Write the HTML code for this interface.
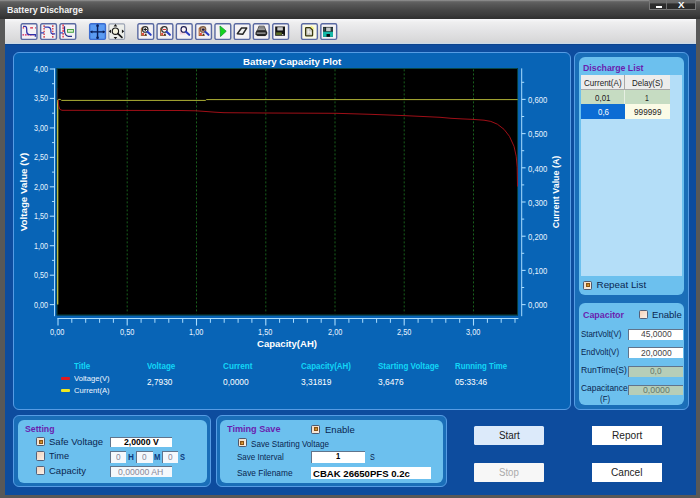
<!DOCTYPE html>
<html><head><meta charset="utf-8"><title>Battery Discharge</title>
<style>
html,body{margin:0;padding:0;}
body{width:700px;height:498px;overflow:hidden;position:relative;background:#0d4c9e;font-family:"Liberation Sans",sans-serif;}
.t{position:absolute;white-space:nowrap;transform-origin:0 50%;display:block;}
.b{position:absolute;box-sizing:border-box;}
svg{position:absolute;overflow:visible;}
</style></head><body>
<div class="b" style="left:0.00px;top:0.00px;width:700.00px;height:498.00px;background:#585858;"></div>
<div class="b" style="left:0.00px;top:0.00px;width:700.00px;height:19.00px;background:linear-gradient(#8a8a8a 0%,#868686 4%,#626262 9%,#565656 26%,#454545 55%,#3c3c3c 78%,#343434 90%,#303030 100%);"></div>
<span class="t" style="left:6.50px;top:2.50px;font-size:9.5px;line-height:13px;color:#f2f2f2;font-weight:bold;transform:scaleX(0.9335);">Battery Discharge</span>
<div class="b" style="left:648.80px;top:0.00px;width:47.20px;height:10.20px;border:1px solid #787878;border-top:none;background:linear-gradient(#6a6a6a 0%,#666 34%,#2e2e2e 42%,#2a2a2a 100%);"></div>
<div class="b" style="left:665.80px;top:0.00px;width:1.00px;height:10.00px;background:#707070;"></div>
<div class="b" style="left:655.90px;top:5.80px;width:6.60px;height:2.20px;background:#fff;"></div>
<span class="t" style="left:677.50px;top:-0.20px;font-size:8.2px;line-height:11px;color:#fff;font-weight:bold;transform:scaleX(1.1884);">X</span>
<div class="b" style="left:4.50px;top:19.20px;width:691.80px;height:24.70px;background:linear-gradient(#f8f8fa 0%,#eeeeef 14%,#e4e4e6 45%,#dadadb 80%,#d4d5d8 93%,#c6daea 100%);"></div>
<div class="b" style="left:4.50px;top:43.90px;width:691.80px;height:450.90px;background:#0d4c9e;"></div>
<div class="b" style="left:4.50px;top:43.90px;width:691.80px;height:1.30px;background:linear-gradient(#0a3a80,#0d4c9e);"></div>
<div class="b" style="left:12.50px;top:52.00px;width:558.50px;height:358.30px;border:1.6px solid #569ce4;border-radius:6px;background:#0864b6;"></div>
<div class="b" style="left:574.00px;top:52.00px;width:114.60px;height:358.30px;border:1.6px solid #569ce4;border-radius:6px;background:#1a6eb8;"></div>
<div class="b" style="left:578.80px;top:56.60px;width:104.80px;height:238.90px;border-radius:6px;background:#6cc0ee;"></div>
<div class="b" style="left:578.80px;top:303.20px;width:104.80px;height:101.80px;border-radius:6px;background:#6cc0ee;"></div>
<div class="b" style="left:13.00px;top:415.00px;width:197.50px;height:72.00px;border:1.6px solid #569ce4;border-radius:6px;background:#1a6eb8;"></div>
<div class="b" style="left:18.00px;top:419.50px;width:189.00px;height:63.00px;border-radius:6px;background:#6cc0ee;"></div>
<div class="b" style="left:216.00px;top:415.00px;width:230.50px;height:72.00px;border:1.6px solid #569ce4;border-radius:6px;background:#1a6eb8;"></div>
<div class="b" style="left:220.00px;top:419.50px;width:223.00px;height:63.00px;border-radius:6px;background:#6cc0ee;"></div>
<svg width="700" height="498" style="left:0;top:0" viewBox="0 0 700 498">
<rect x="56.6" y="68.1" width="461.4" height="247.3" fill="#000"/>
<path d="M57.1 315V68.5H517.6V315Z" fill="none" stroke="#0a5654" stroke-width="0.8"/>
<line x1="127.2" y1="69.4" x2="127.2" y2="313.6" stroke="#18601c" stroke-width="1" stroke-dasharray="2 2"/>
<line x1="196.5" y1="69.4" x2="196.5" y2="313.6" stroke="#18601c" stroke-width="1" stroke-dasharray="2 2"/>
<line x1="265.8" y1="69.4" x2="265.8" y2="313.6" stroke="#18601c" stroke-width="1" stroke-dasharray="2 2"/>
<line x1="335.0" y1="69.4" x2="335.0" y2="313.6" stroke="#18601c" stroke-width="1" stroke-dasharray="2 2"/>
<line x1="404.2" y1="69.4" x2="404.2" y2="313.6" stroke="#18601c" stroke-width="1" stroke-dasharray="2 2"/>
<line x1="473.5" y1="69.4" x2="473.5" y2="313.6" stroke="#18601c" stroke-width="1" stroke-dasharray="2 2"/>
<line x1="54.5" y1="68.4" x2="54.5" y2="316.2" stroke="#a8dcff" stroke-width="1"/>
<line x1="49.8" y1="69.0" x2="54.5" y2="69.0" stroke="#a8dcff" stroke-width="1.1"/>
<line x1="52" y1="83.7" x2="54.5" y2="83.7" stroke="#a8dcff" stroke-width="1"/>
<line x1="49.8" y1="98.4" x2="54.5" y2="98.4" stroke="#a8dcff" stroke-width="1.1"/>
<line x1="52" y1="113.2" x2="54.5" y2="113.2" stroke="#a8dcff" stroke-width="1"/>
<line x1="49.8" y1="127.9" x2="54.5" y2="127.9" stroke="#a8dcff" stroke-width="1.1"/>
<line x1="52" y1="142.6" x2="54.5" y2="142.6" stroke="#a8dcff" stroke-width="1"/>
<line x1="49.8" y1="157.4" x2="54.5" y2="157.4" stroke="#a8dcff" stroke-width="1.1"/>
<line x1="52" y1="172.1" x2="54.5" y2="172.1" stroke="#a8dcff" stroke-width="1"/>
<line x1="49.8" y1="186.8" x2="54.5" y2="186.8" stroke="#a8dcff" stroke-width="1.1"/>
<line x1="52" y1="201.5" x2="54.5" y2="201.5" stroke="#a8dcff" stroke-width="1"/>
<line x1="49.8" y1="216.2" x2="54.5" y2="216.2" stroke="#a8dcff" stroke-width="1.1"/>
<line x1="52" y1="231.0" x2="54.5" y2="231.0" stroke="#a8dcff" stroke-width="1"/>
<line x1="49.8" y1="245.7" x2="54.5" y2="245.7" stroke="#a8dcff" stroke-width="1.1"/>
<line x1="52" y1="260.4" x2="54.5" y2="260.4" stroke="#a8dcff" stroke-width="1"/>
<line x1="49.8" y1="275.2" x2="54.5" y2="275.2" stroke="#a8dcff" stroke-width="1.1"/>
<line x1="52" y1="289.9" x2="54.5" y2="289.9" stroke="#a8dcff" stroke-width="1"/>
<line x1="49.8" y1="304.6" x2="54.5" y2="304.6" stroke="#a8dcff" stroke-width="1.1"/>
<line x1="521.7" y1="68.4" x2="521.7" y2="316.2" stroke="#a8dcff" stroke-width="1"/>
<line x1="521.7" y1="99.4" x2="525.6" y2="99.4" stroke="#a8dcff" stroke-width="1.1"/>
<line x1="521.7" y1="82.3" x2="524.2" y2="82.3" stroke="#a8dcff" stroke-width="1"/>
<line x1="521.7" y1="133.6" x2="525.6" y2="133.6" stroke="#a8dcff" stroke-width="1.1"/>
<line x1="521.7" y1="116.5" x2="524.2" y2="116.5" stroke="#a8dcff" stroke-width="1"/>
<line x1="521.7" y1="167.8" x2="525.6" y2="167.8" stroke="#a8dcff" stroke-width="1.1"/>
<line x1="521.7" y1="150.7" x2="524.2" y2="150.7" stroke="#a8dcff" stroke-width="1"/>
<line x1="521.7" y1="202.0" x2="525.6" y2="202.0" stroke="#a8dcff" stroke-width="1.1"/>
<line x1="521.7" y1="184.9" x2="524.2" y2="184.9" stroke="#a8dcff" stroke-width="1"/>
<line x1="521.7" y1="236.2" x2="525.6" y2="236.2" stroke="#a8dcff" stroke-width="1.1"/>
<line x1="521.7" y1="219.1" x2="524.2" y2="219.1" stroke="#a8dcff" stroke-width="1"/>
<line x1="521.7" y1="270.4" x2="525.6" y2="270.4" stroke="#a8dcff" stroke-width="1.1"/>
<line x1="521.7" y1="253.3" x2="524.2" y2="253.3" stroke="#a8dcff" stroke-width="1"/>
<line x1="521.7" y1="304.6" x2="525.6" y2="304.6" stroke="#a8dcff" stroke-width="1.1"/>
<line x1="521.7" y1="287.5" x2="524.2" y2="287.5" stroke="#a8dcff" stroke-width="1"/>
<line x1="57.4" y1="318.5" x2="518.4" y2="318.5" stroke="#a8dcff" stroke-width="1"/>
<line x1="58.0" y1="318.5" x2="58.0" y2="325.6" stroke="#a8dcff" stroke-width="1.1"/>
<line x1="71.8" y1="318.5" x2="71.8" y2="322.8" stroke="#a8dcff" stroke-width="1"/>
<line x1="85.7" y1="318.5" x2="85.7" y2="322.8" stroke="#a8dcff" stroke-width="1"/>
<line x1="99.6" y1="318.5" x2="99.6" y2="322.8" stroke="#a8dcff" stroke-width="1"/>
<line x1="113.4" y1="318.5" x2="113.4" y2="322.8" stroke="#a8dcff" stroke-width="1"/>
<line x1="127.2" y1="318.5" x2="127.2" y2="325.6" stroke="#a8dcff" stroke-width="1.1"/>
<line x1="141.1" y1="318.5" x2="141.1" y2="322.8" stroke="#a8dcff" stroke-width="1"/>
<line x1="154.9" y1="318.5" x2="154.9" y2="322.8" stroke="#a8dcff" stroke-width="1"/>
<line x1="168.8" y1="318.5" x2="168.8" y2="322.8" stroke="#a8dcff" stroke-width="1"/>
<line x1="182.7" y1="318.5" x2="182.7" y2="322.8" stroke="#a8dcff" stroke-width="1"/>
<line x1="196.5" y1="318.5" x2="196.5" y2="325.6" stroke="#a8dcff" stroke-width="1.1"/>
<line x1="210.4" y1="318.5" x2="210.4" y2="322.8" stroke="#a8dcff" stroke-width="1"/>
<line x1="224.2" y1="318.5" x2="224.2" y2="322.8" stroke="#a8dcff" stroke-width="1"/>
<line x1="238.1" y1="318.5" x2="238.1" y2="322.8" stroke="#a8dcff" stroke-width="1"/>
<line x1="251.9" y1="318.5" x2="251.9" y2="322.8" stroke="#a8dcff" stroke-width="1"/>
<line x1="265.8" y1="318.5" x2="265.8" y2="325.6" stroke="#a8dcff" stroke-width="1.1"/>
<line x1="279.6" y1="318.5" x2="279.6" y2="322.8" stroke="#a8dcff" stroke-width="1"/>
<line x1="293.5" y1="318.5" x2="293.5" y2="322.8" stroke="#a8dcff" stroke-width="1"/>
<line x1="307.3" y1="318.5" x2="307.3" y2="322.8" stroke="#a8dcff" stroke-width="1"/>
<line x1="321.2" y1="318.5" x2="321.2" y2="322.8" stroke="#a8dcff" stroke-width="1"/>
<line x1="335.0" y1="318.5" x2="335.0" y2="325.6" stroke="#a8dcff" stroke-width="1.1"/>
<line x1="348.9" y1="318.5" x2="348.9" y2="322.8" stroke="#a8dcff" stroke-width="1"/>
<line x1="362.7" y1="318.5" x2="362.7" y2="322.8" stroke="#a8dcff" stroke-width="1"/>
<line x1="376.6" y1="318.5" x2="376.6" y2="322.8" stroke="#a8dcff" stroke-width="1"/>
<line x1="390.4" y1="318.5" x2="390.4" y2="322.8" stroke="#a8dcff" stroke-width="1"/>
<line x1="404.2" y1="318.5" x2="404.2" y2="325.6" stroke="#a8dcff" stroke-width="1.1"/>
<line x1="418.1" y1="318.5" x2="418.1" y2="322.8" stroke="#a8dcff" stroke-width="1"/>
<line x1="432.0" y1="318.5" x2="432.0" y2="322.8" stroke="#a8dcff" stroke-width="1"/>
<line x1="445.8" y1="318.5" x2="445.8" y2="322.8" stroke="#a8dcff" stroke-width="1"/>
<line x1="459.7" y1="318.5" x2="459.7" y2="322.8" stroke="#a8dcff" stroke-width="1"/>
<line x1="473.5" y1="318.5" x2="473.5" y2="325.6" stroke="#a8dcff" stroke-width="1.1"/>
<line x1="487.4" y1="318.5" x2="487.4" y2="322.8" stroke="#a8dcff" stroke-width="1"/>
<line x1="501.2" y1="318.5" x2="501.2" y2="322.8" stroke="#a8dcff" stroke-width="1"/>
<line x1="515.0" y1="318.5" x2="515.0" y2="322.8" stroke="#a8dcff" stroke-width="1"/>
<polyline fill="none" stroke="#b8ba38" stroke-width="0.95" points="57.7,100.2 58.4,99.4 60.5,99.4 61.5,100.4 205.5,100.4 206.5,99.6 517.7,99.6"/>
<line x1="57.7" y1="100" x2="57.7" y2="304.6" stroke="#c8ca48" stroke-width="1.25"/>
<line x1="57.6" y1="88" x2="57.6" y2="100" stroke="#7a1018" stroke-width="0.9" opacity="0.4"/>
<polyline fill="none" stroke="#a81018" stroke-width="0.95" stroke-linejoin="round" points="58.1,100 58.7,106 59.8,109.3 62,110.3 120,110.4 180,110.5 196,110.8 206,111.5 215,112.2 224,112.7 265,113 336,113.3 370,114.3 404,115.6 440,117.3 451,118.3 462,118.9 473,119.4 484,120.2 490.8,121.4 497.4,124.2 504,129.3 509.5,136.4 514,146.3 516.2,156.2 517.2,167.3 517.5,186.5"/>
</svg>
<span class="t" style="left:33.60px;top:62.90px;font-size:8.4px;line-height:12px;color:#e8f4ff;transform:scaleX(0.8625);">4,00</span>
<span class="t" style="left:33.60px;top:92.35px;font-size:8.4px;line-height:12px;color:#e8f4ff;transform:scaleX(0.8625);">3,50</span>
<span class="t" style="left:33.60px;top:121.80px;font-size:8.4px;line-height:12px;color:#e8f4ff;transform:scaleX(0.8625);">3,00</span>
<span class="t" style="left:33.60px;top:151.25px;font-size:8.4px;line-height:12px;color:#e8f4ff;transform:scaleX(0.8625);">2,50</span>
<span class="t" style="left:33.60px;top:180.70px;font-size:8.4px;line-height:12px;color:#e8f4ff;transform:scaleX(0.8625);">2,00</span>
<span class="t" style="left:33.60px;top:210.15px;font-size:8.4px;line-height:12px;color:#e8f4ff;transform:scaleX(0.8625);">1,50</span>
<span class="t" style="left:33.60px;top:239.60px;font-size:8.4px;line-height:12px;color:#e8f4ff;transform:scaleX(0.8625);">1,00</span>
<span class="t" style="left:33.60px;top:269.05px;font-size:8.4px;line-height:12px;color:#e8f4ff;transform:scaleX(0.8625);">0,50</span>
<span class="t" style="left:33.60px;top:298.50px;font-size:8.4px;line-height:12px;color:#e8f4ff;transform:scaleX(0.8625);">0,00</span>
<span class="t" style="left:528.00px;top:94.10px;font-size:8.4px;line-height:12px;color:#e8f4ff;transform:scaleX(0.9135);">0,600</span>
<span class="t" style="left:528.00px;top:128.30px;font-size:8.4px;line-height:12px;color:#e8f4ff;transform:scaleX(0.9135);">0,500</span>
<span class="t" style="left:528.00px;top:162.50px;font-size:8.4px;line-height:12px;color:#e8f4ff;transform:scaleX(0.9135);">0,400</span>
<span class="t" style="left:528.00px;top:196.70px;font-size:8.4px;line-height:12px;color:#e8f4ff;transform:scaleX(0.9135);">0,300</span>
<span class="t" style="left:528.00px;top:230.90px;font-size:8.4px;line-height:12px;color:#e8f4ff;transform:scaleX(0.9135);">0,200</span>
<span class="t" style="left:528.00px;top:265.10px;font-size:8.4px;line-height:12px;color:#e8f4ff;transform:scaleX(0.9135);">0,100</span>
<span class="t" style="left:528.00px;top:299.30px;font-size:8.4px;line-height:12px;color:#e8f4ff;transform:scaleX(0.9135);">0,000</span>
<span class="t" style="left:49.70px;top:325.50px;font-size:8.4px;line-height:12px;color:#e8f4ff;transform:scaleX(0.8809);">0,00</span>
<span class="t" style="left:119.75px;top:325.50px;font-size:8.4px;line-height:12px;color:#e8f4ff;transform:scaleX(0.8809);">0,50</span>
<span class="t" style="left:189.00px;top:325.50px;font-size:8.4px;line-height:12px;color:#e8f4ff;transform:scaleX(0.8809);">1,00</span>
<span class="t" style="left:258.25px;top:325.50px;font-size:8.4px;line-height:12px;color:#e8f4ff;transform:scaleX(0.8809);">1,50</span>
<span class="t" style="left:327.50px;top:325.50px;font-size:8.4px;line-height:12px;color:#e8f4ff;transform:scaleX(0.8809);">2,00</span>
<span class="t" style="left:396.75px;top:325.50px;font-size:8.4px;line-height:12px;color:#e8f4ff;transform:scaleX(0.8809);">2,50</span>
<span class="t" style="left:466.00px;top:325.50px;font-size:8.4px;line-height:12px;color:#e8f4ff;transform:scaleX(0.8809);">3,00</span>
<span class="t" style="left:242.90px;top:55.10px;font-size:9.6px;line-height:13px;color:#fff;font-weight:bold;transform:scaleX(1.0170);">Battery Capacity Plot</span>
<span class="t" style="left:257.10px;top:337.30px;font-size:9.6px;line-height:13px;color:#fff;font-weight:bold;transform:scaleX(0.9955);">Capacity(AH)</span>
<span class="t" style="left:-14.59px;top:185.20px;font-size:9.6px;line-height:14px;color:#fff;font-weight:bold;transform-origin:50% 50%;transform:rotate(-90deg) scaleX(1.0185);">Voltage Value (V)</span>
<span class="t" style="left:516.60px;top:185.20px;font-size:9.6px;line-height:14px;color:#fff;font-weight:bold;transform-origin:50% 50%;transform:rotate(-90deg) scaleX(0.9259);">Current Value (A)</span>
<span class="t" style="left:74.30px;top:360.00px;font-size:8.6px;line-height:12px;color:#12d6f6;font-weight:bold;transform:scaleX(0.9303);">Title</span>
<span class="t" style="left:146.60px;top:360.00px;font-size:8.6px;line-height:12px;color:#12d6f6;font-weight:bold;transform:scaleX(0.9303);">Voltage</span>
<span class="t" style="left:223.40px;top:360.00px;font-size:8.6px;line-height:12px;color:#12d6f6;font-weight:bold;transform:scaleX(0.9499);">Current</span>
<span class="t" style="left:300.90px;top:360.00px;font-size:8.6px;line-height:12px;color:#12d6f6;font-weight:bold;transform:scaleX(0.9260);">Capacity(AH)</span>
<span class="t" style="left:378.00px;top:360.00px;font-size:8.6px;line-height:12px;color:#12d6f6;font-weight:bold;transform:scaleX(0.9357);">Starting Voltage</span>
<span class="t" style="left:454.90px;top:360.00px;font-size:8.6px;line-height:12px;color:#12d6f6;font-weight:bold;transform:scaleX(0.9131);">Running Time</span>
<span class="t" style="left:74.30px;top:372.70px;font-size:7.9px;line-height:11px;color:#eef6ff;transform:scaleX(0.9678);">Voltage(V)</span>
<span class="t" style="left:74.30px;top:385.30px;font-size:7.9px;line-height:11px;color:#eef6ff;transform:scaleX(0.9682);">Current(A)</span>
<div class="b" style="left:61.00px;top:377.00px;width:9.00px;height:3.00px;background:#e01820;border-radius:1px;"></div>
<div class="b" style="left:61.00px;top:389.20px;width:9.00px;height:3.00px;background:#f0e820;border-radius:1px;"></div>
<span class="t" style="left:146.60px;top:376.20px;font-size:8.6px;line-height:12px;color:#fff;transform:scaleX(0.9657);">2,7930</span>
<span class="t" style="left:223.40px;top:376.20px;font-size:8.6px;line-height:12px;color:#fff;transform:scaleX(0.9771);">0,0000</span>
<span class="t" style="left:300.90px;top:376.20px;font-size:8.6px;line-height:12px;color:#fff;transform:scaleX(0.9812);">3,31819</span>
<span class="t" style="left:378.00px;top:376.20px;font-size:8.6px;line-height:12px;color:#fff;transform:scaleX(0.9771);">3,6476</span>
<span class="t" style="left:454.90px;top:376.20px;font-size:8.6px;line-height:12px;color:#fff;transform:scaleX(0.9620);">05:33:46</span>
<span class="t" style="left:583.30px;top:60.70px;font-size:9.6px;line-height:13px;color:#6a1eae;font-weight:bold;transform:scaleX(0.9146);">Discharge List</span>
<div class="b" style="left:581.00px;top:75.00px;width:100.50px;height:200.50px;background:#b4def8;"></div>
<div class="b" style="left:581.00px;top:75.00px;width:88.50px;height:14.50px;background:#ececec;border-bottom:1px solid #a8a8a8;"></div>
<div class="b" style="left:624.00px;top:75.00px;width:1.00px;height:14.50px;background:#a8a8a8;"></div>
<div class="b" style="left:581.00px;top:89.50px;width:88.50px;height:14.50px;background:#c6dcc2;"></div>
<div class="b" style="left:624.00px;top:89.50px;width:1.00px;height:14.50px;background:#e6efe2;"></div>
<div class="b" style="left:581.00px;top:104.00px;width:43.50px;height:14.50px;background:#0c6cd4;"></div>
<div class="b" style="left:624.50px;top:104.00px;width:45.00px;height:14.50px;background:#fbfbe6;"></div>
<span class="t" style="left:584.00px;top:77.00px;font-size:8.8px;line-height:12px;color:#222;transform:scaleX(0.9155);">Current(A)</span>
<span class="t" style="left:632.00px;top:77.00px;font-size:8.8px;line-height:12px;color:#222;transform:scaleX(0.9057);">Delay(S)</span>
<span class="t" style="left:595.00px;top:92.00px;font-size:8.8px;line-height:12px;color:#222;transform:scaleX(0.9051);">0,01</span>
<span class="t" style="left:645.20px;top:92.00px;font-size:8.8px;line-height:12px;color:#222;transform:scaleX(0.7765);">1</span>
<span class="t" style="left:597.50px;top:106.20px;font-size:8.8px;line-height:12px;color:#fff;transform:scaleX(0.8993);">0,6</span>
<span class="t" style="left:634.00px;top:106.20px;font-size:8.8px;line-height:12px;color:#222;transform:scaleX(0.9366);">999999</span>
<div class="b" style="left:583.20px;top:280.60px;width:9.20px;height:9.20px;border:1px solid #50586c;border-radius:1.5px;background:linear-gradient(135deg,#f4dcc4,#f8ece0);"><div class="b" style="left:1.5px;top:1.5px;width:4.4px;height:4.4px;background:linear-gradient(135deg,#a86818,#eeb040);border:0.6px solid #8a5414;"></div></div>
<span class="t" style="left:596.60px;top:277.90px;font-size:9.8px;line-height:14px;color:#0a2650;">Repeat List</span>
<span class="t" style="left:582.80px;top:308.00px;font-size:9.6px;line-height:13px;color:#6a1eae;font-weight:bold;transform:scaleX(0.9260);">Capacitor</span>
<div class="b" style="left:639.00px;top:310.00px;width:9.20px;height:9.20px;border:1px solid #566078;border-radius:1.5px;background:linear-gradient(135deg,#f4d2ba,#f8f0e8);"></div>
<span class="t" style="left:652.00px;top:308.20px;font-size:9.8px;line-height:14px;color:#0a2650;transform:scaleX(0.9766);">Enable</span>
<span class="t" style="left:581.00px;top:327.60px;font-size:8.4px;line-height:12px;color:#0a2650;transform:scaleX(0.9430);">StartVolt(V)</span>
<span class="t" style="left:581.00px;top:345.80px;font-size:8.4px;line-height:12px;color:#0a2650;transform:scaleX(0.9514);">EndVolt(V)</span>
<span class="t" style="left:581.00px;top:363.70px;font-size:9.0px;line-height:13px;color:#0a2650;transform:scaleX(0.9529);">RunTime(S)</span>
<span class="t" style="left:581.00px;top:382.40px;font-size:9.0px;line-height:13px;color:#0a2650;transform:scaleX(0.9315);">Capacitance</span>
<span class="t" style="left:599.50px;top:392.50px;font-size:8.4px;line-height:12px;color:#0a2650;transform:scaleX(0.9418);">(F)</span>
<div class="b" style="left:628.00px;top:328.50px;width:55.00px;height:11.10px;border-top:1px solid #60748c;border-left:1px solid #60748c;background:#fff;"></div>
<div class="b" style="left:628.00px;top:347.30px;width:55.00px;height:11.10px;border-top:1px solid #60748c;border-left:1px solid #60748c;background:#fff;"></div>
<div class="b" style="left:628.00px;top:366.00px;width:55.00px;height:10.60px;border-top:1px solid #60748c;border-left:1px solid #60748c;background:#b6ceb8;"></div>
<div class="b" style="left:628.00px;top:384.60px;width:55.00px;height:10.70px;border-top:1px solid #60748c;border-left:1px solid #60748c;background:#b6ceb8;"></div>
<span class="t" style="left:640.70px;top:327.90px;font-size:9.0px;line-height:13px;color:#444;transform:scaleX(0.9407);">45,0000</span>
<span class="t" style="left:640.70px;top:346.70px;font-size:9.0px;line-height:13px;color:#444;transform:scaleX(0.9407);">20,0000</span>
<span class="t" style="left:650.20px;top:365.10px;font-size:9.0px;line-height:13px;color:#66786a;transform:scaleX(0.9193);">0,0</span>
<span class="t" style="left:642.60px;top:383.70px;font-size:9.0px;line-height:13px;color:#66786a;transform:scaleX(0.9737);">0,0000</span>
<span class="t" style="left:24.60px;top:422.00px;font-size:9.6px;line-height:13px;color:#6a1eae;font-weight:bold;transform:scaleX(0.9069);">Setting</span>
<div class="b" style="left:36.00px;top:437.30px;width:9.20px;height:9.20px;border:1px solid #50586c;border-radius:1.5px;background:linear-gradient(135deg,#f4dcc4,#f8ece0);"><div class="b" style="left:1.5px;top:1.5px;width:4.4px;height:4.4px;background:linear-gradient(135deg,#a86818,#eeb040);border:0.6px solid #8a5414;"></div></div>
<div class="b" style="left:36.00px;top:451.40px;width:9.20px;height:9.20px;border:1px solid #566078;border-radius:1.5px;background:linear-gradient(135deg,#f4d2ba,#f8f0e8);"></div>
<div class="b" style="left:36.00px;top:465.80px;width:9.20px;height:9.20px;border:1px solid #566078;border-radius:1.5px;background:linear-gradient(135deg,#f4d2ba,#f8f0e8);"></div>
<span class="t" style="left:49.20px;top:434.90px;font-size:9.8px;line-height:14px;color:#0a2650;transform:scaleX(0.9734);">Safe Voltage</span>
<span class="t" style="left:49.20px;top:449.20px;font-size:9.8px;line-height:14px;color:#0a2650;transform:scaleX(0.9387);">Time</span>
<span class="t" style="left:49.20px;top:463.60px;font-size:9.8px;line-height:14px;color:#0a2650;transform:scaleX(0.9705);">Capacity</span>
<div class="b" style="left:109.70px;top:437.00px;width:62.10px;height:10.40px;border-top:1px solid #60748c;border-left:1px solid #60748c;background:#fff;"></div>
<span class="t" style="left:123.80px;top:436.00px;font-size:9.0px;line-height:13px;color:#000;font-weight:bold;transform:scaleX(0.9631);">2,0000 V</span>
<div class="b" style="left:109.70px;top:451.40px;width:16.20px;height:11.20px;border-top:1px solid #60748c;border-left:1px solid #60748c;background:#f4f8fc;"></div>
<span class="t" style="left:115.50px;top:451.30px;font-size:8.8px;line-height:12px;color:#889;transform:scaleX(0.9400);">0</span>
<div class="b" style="left:135.70px;top:451.40px;width:16.90px;height:11.20px;border-top:1px solid #60748c;border-left:1px solid #60748c;background:#f4f8fc;"></div>
<span class="t" style="left:141.85px;top:451.30px;font-size:8.8px;line-height:12px;color:#889;transform:scaleX(0.9400);">0</span>
<div class="b" style="left:162.40px;top:451.40px;width:16.10px;height:11.20px;border-top:1px solid #60748c;border-left:1px solid #60748c;background:#f4f8fc;"></div>
<span class="t" style="left:168.15px;top:451.30px;font-size:8.8px;line-height:12px;color:#889;transform:scaleX(0.9400);">0</span>
<span class="t" style="left:127.80px;top:450.80px;font-size:9px;line-height:13px;color:#0c3c80;font-weight:bold;transform:scaleX(0.9077);">H</span>
<span class="t" style="left:154.00px;top:450.80px;font-size:9px;line-height:13px;color:#0c3c80;font-weight:bold;transform:scaleX(0.8537);">M</span>
<span class="t" style="left:180.00px;top:450.80px;font-size:9px;line-height:13px;color:#0c3c80;font-weight:bold;transform:scaleX(0.8329);">S</span>
<div class="b" style="left:109.70px;top:466.40px;width:62.10px;height:10.40px;border-top:1px solid #60748c;border-left:1px solid #60748c;background:#f4f8fc;"></div>
<span class="t" style="left:118.00px;top:465.60px;font-size:8.8px;line-height:12px;color:#889;transform:scaleX(0.9828);">0,00000 AH</span>
<span class="t" style="left:226.70px;top:421.90px;font-size:9.6px;line-height:13px;color:#6a1eae;font-weight:bold;transform:scaleX(0.9490);">Timing Save</span>
<div class="b" style="left:311.20px;top:424.50px;width:9.20px;height:9.20px;border:1px solid #50586c;border-radius:1.5px;background:linear-gradient(135deg,#f4dcc4,#f8ece0);"><div class="b" style="left:1.5px;top:1.5px;width:4.4px;height:4.4px;background:linear-gradient(135deg,#a86818,#eeb040);border:0.6px solid #8a5414;"></div></div>
<span class="t" style="left:324.70px;top:422.50px;font-size:9.8px;line-height:14px;color:#0a2650;transform:scaleX(0.9733);">Enable</span>
<div class="b" style="left:237.50px;top:438.30px;width:9.20px;height:9.20px;border:1px solid #50586c;border-radius:1.5px;background:linear-gradient(135deg,#f4dcc4,#f8ece0);"><div class="b" style="left:1.5px;top:1.5px;width:4.4px;height:4.4px;background:linear-gradient(135deg,#a86818,#eeb040);border:0.6px solid #8a5414;"></div></div>
<span class="t" style="left:251.00px;top:437.50px;font-size:8.6px;line-height:12px;color:#0a2650;transform:scaleX(0.9431);">Save Starting Voltage</span>
<span class="t" style="left:237.00px;top:450.90px;font-size:8.4px;line-height:12px;color:#0a2650;transform:scaleX(0.9547);">Save Interval</span>
<span class="t" style="left:237.00px;top:467.40px;font-size:8.8px;line-height:12px;color:#0a2650;transform:scaleX(0.9473);">Save Filename</span>
<div class="b" style="left:310.80px;top:450.70px;width:54.40px;height:12.70px;border-top:1px solid #60748c;border-left:1px solid #60748c;background:#fff;"></div>
<span class="t" style="left:335.60px;top:449.90px;font-size:9.2px;line-height:13px;color:#000;font-weight:bold;transform:scaleX(0.8209);">1</span>
<span class="t" style="left:369.70px;top:450.00px;font-size:9.8px;line-height:14px;color:#0a2650;transform:scaleX(0.7343);">S</span>
<div class="b" style="left:310.80px;top:467.00px;width:120.00px;height:12.40px;background:#fff;"></div>
<span class="t" style="left:313.30px;top:466.80px;font-size:9.4px;line-height:13px;color:#000;font-weight:bold;transform:scaleX(1.0212);">CBAK 26650PFS 0.2c</span>
<div class="b" style="left:474.30px;top:425.80px;width:69.70px;height:19.20px;background:#dceafa;border-radius:1.5px;"></div>
<div class="b" style="left:474.30px;top:462.80px;width:69.70px;height:19.20px;background:#f7f7f7;border-radius:1px;"></div>
<div class="b" style="left:592.20px;top:425.80px;width:69.80px;height:19.20px;background:#fff;"></div>
<div class="b" style="left:592.20px;top:462.80px;width:69.80px;height:19.20px;background:#fff;"></div>
<span class="t" style="left:498.70px;top:428.60px;font-size:10px;line-height:14px;color:#1a1a1a;transform:scaleX(0.9850);">Start</span>
<span class="t" style="left:499.00px;top:465.60px;font-size:10px;line-height:14px;color:#aaa;transform:scaleX(0.9626);">Stop</span>
<span class="t" style="left:611.80px;top:428.60px;font-size:10px;line-height:14px;color:#222;transform:scaleX(1.0096);">Report</span>
<span class="t" style="left:611.40px;top:465.60px;font-size:10px;line-height:14px;color:#222;transform:scaleX(1.0120);">Cancel</span>
<svg style="left:19px;top:22px" width="20" height="20" viewBox="0 0 20 20"><g transform="translate(1.45 1.10) scale(1.0118 1.0303)"><rect x="0.7" y="0.7" width="15.6" height="15.1" rx="1.4" ry="1.4" fill="#f4f2f4" stroke="#5a6aa2" stroke-width="1.4"/><path d="M2.2 4.7H3.6 M9.6 4.7H12.4 M14.4 4.7H15.2" stroke="#d8203c" stroke-width="1.2" fill="none"/><path d="M2 11.4H13" stroke="#d01858" stroke-width="1.2" stroke-dasharray="1.6 0.9" fill="none"/><path d="M2.6 3.2H4.6C6.2 3.2 6.2 4.8 6.2 6.2V8.2C6.2 10.6 7.4 11.1 9 11.1H14.7V13.2" stroke="#3030a8" stroke-width="1.25" fill="none"/></g></svg>
<svg style="left:38px;top:22px" width="20" height="20" viewBox="0 0 20 20"><g transform="translate(1.95 1.10) scale(1.0118 1.0303)"><rect x="0.7" y="0.7" width="15.6" height="15.1" rx="1.4" ry="1.4" fill="#f4f2f4" stroke="#5a6aa2" stroke-width="1.4"/><path d="M4.1 2.2V14.2 M12.7 2.2V14.2" stroke="#d02030" stroke-width="1.2" stroke-dasharray="1.5 1.1" fill="none"/><path d="M1 9.5H4.1 M4.4 3.8H8C10.4 3.8 10.7 5 10.8 7V8.6C10.8 10.2 11.4 10.4 12.6 10.4H15" stroke="#3038b0" stroke-width="1.2" fill="none"/></g></svg>
<svg style="left:58px;top:22px" width="20" height="20" viewBox="0 0 20 20"><g transform="translate(1.25 1.10) scale(1.0118 1.0303)"><rect x="0.7" y="0.7" width="15.6" height="15.1" rx="1.4" ry="1.4" fill="#f4f2f4" stroke="#5a6aa2" stroke-width="1.4"/><path d="M3.8 1.4V14.6" stroke="#e8203c" stroke-width="1.3" stroke-dasharray="1.8 0.9" fill="none"/><path d="M0.8 9.5H3.6" stroke="#3048c0" stroke-width="1.2" fill="none"/><path d="M5.2 3V7.2C5.4 10.5 6.8 12.6 9 12.9H12.6" stroke="#283088" stroke-width="1.2" fill="none"/><rect x="8.2" y="6.2" width="5.8" height="2.7" fill="#d8f0c8" stroke="#3c9c3c" stroke-width="0.9"/></g></svg>
<svg style="left:87px;top:22px" width="20" height="20" viewBox="0 0 20 20"><g transform="translate(1.95 1.10) scale(1.0118 1.0303)"><rect x="0.7" y="0.7" width="15.6" height="15.1" rx="1.4" ry="1.4" fill="#4a8eee" stroke="#3c6cd0" stroke-width="1.4"/><rect x="1.6" y="1.6" width="6" height="6" fill="#6aa6f6" opacity="0.55"/><rect x="9.4" y="1.6" width="6" height="6" fill="#6aa6f6" opacity="0.55"/><rect x="1.6" y="9.4" width="6" height="5.6" fill="#6aa6f6" opacity="0.55"/><rect x="9.4" y="9.4" width="6" height="5.6" fill="#6aa6f6" opacity="0.55"/><path d="M8.5 2.2V14.6 M1.7 8.5H15.4" stroke="#0a1e58" stroke-width="1.35" fill="none"/><circle cx="8.5" cy="2.5" r="1.3" fill="#0a1e58"/><circle cx="8.5" cy="14.2" r="1.3" fill="#0a1e58"/><path d="M1.1 8.5L3.4 6.9V10.1Z M16 8.5L13.7 6.9V10.1Z" fill="#0a1e58"/></g></svg>
<svg style="left:107px;top:22px" width="20" height="20" viewBox="0 0 20 20"><g transform="translate(1.15 1.10) scale(1.0118 1.0303)"><rect x="0.7" y="0.7" width="15.6" height="15.1" rx="1.4" ry="1.4" fill="#eceeea" stroke="#9aa2b4" stroke-width="1.1"/><circle cx="7.2" cy="7.9" r="3.1" fill="#f6f4dc" stroke="#181818" stroke-width="1.1"/><path d="M9.6 10.2L13.6 13.8" stroke="#181818" stroke-width="1.7" stroke-linecap="round"/><path d="M7.2 0.9L9 3.2H5.4Z M7.2 15.7L9 13.4H5.4Z M0.6 8L2.9 6.2V9.8Z M15.9 8L13.6 6.2V9.8Z" fill="#181818"/></g></svg>
<svg style="left:136px;top:22px" width="20" height="20" viewBox="0 0 20 20"><g transform="translate(1.15 1.10) scale(1.0118 1.0303)"><rect x="0.7" y="0.7" width="15.6" height="15.1" rx="1.4" ry="1.4" fill="#f4f2f4" stroke="#5a6aa2" stroke-width="1.4"/><path d="M4.2 5.2L6 3.6 M4.2 5V12H9.6" stroke="#9a6a40" stroke-width="1.1" fill="none"/><rect x="4.8" y="9.6" width="2" height="2" fill="#e8483c"/><rect x="7.6" y="10.3" width="1.7" height="1.7" fill="#403020"/><circle cx="8" cy="6.2" r="2.7" fill="#fff" stroke="#2a2a2a" stroke-width="1.15"/><path d="M10.2 8.4L13.4 11.4" stroke="#2a3cc0" stroke-width="2" stroke-linecap="round"/><path d="M8 4.6V7.8 M6.4 6.2H9.6" stroke="#111" stroke-width="1"/></g></svg>
<svg style="left:155px;top:22px" width="20" height="20" viewBox="0 0 20 20"><g transform="translate(1.35 1.10) scale(1.0118 1.0303)"><rect x="0.7" y="0.7" width="15.6" height="15.1" rx="1.4" ry="1.4" fill="#f4f2f4" stroke="#5a6aa2" stroke-width="1.4"/><path d="M4.2 5.2L6 3.6 M4.2 5V12H9.6" stroke="#9a6a40" stroke-width="1.1" fill="none"/><rect x="4.8" y="9.6" width="2" height="2" fill="#e8483c"/><rect x="7.6" y="10.3" width="1.7" height="1.7" fill="#403020"/><circle cx="8" cy="6.2" r="2.7" fill="#fff" stroke="#2a2a2a" stroke-width="1.15"/><path d="M10.2 8.4L13.4 11.4" stroke="#2a3cc0" stroke-width="2" stroke-linecap="round"/><path d="M6.5 6.2H9.5" stroke="#d83030" stroke-width="1.1"/></g></svg>
<svg style="left:174px;top:22px" width="20" height="20" viewBox="0 0 20 20"><g transform="translate(1.65 1.10) scale(1.0118 1.0303)"><rect x="0.7" y="0.7" width="15.6" height="15.1" rx="1.4" ry="1.4" fill="#f4f2f4" stroke="#5a6aa2" stroke-width="1.4"/><rect x="4" y="7.4" width="5.8" height="3.6" fill="#f0c8d8" opacity="0.8"/><circle cx="8" cy="6.2" r="2.7" fill="#fbf4f8" stroke="#1c1c50" stroke-width="1.15"/><path d="M10.2 8.4L13.4 11.4" stroke="#2a3cc0" stroke-width="2" stroke-linecap="round"/></g></svg>
<svg style="left:193px;top:22px" width="20" height="20" viewBox="0 0 20 20"><g transform="translate(1.95 1.10) scale(1.0118 1.0303)"><rect x="0.7" y="0.7" width="15.6" height="15.1" rx="1.4" ry="1.4" fill="#f4f2f4" stroke="#5a6aa2" stroke-width="1.4"/><path d="M4.2 5.2L6 3.6 M4.2 5V12H9.6" stroke="#a86030" stroke-width="1.1" fill="none"/><rect x="4.8" y="9.6" width="2" height="2" fill="#e8483c"/><rect x="7.6" y="10.3" width="1.7" height="1.7" fill="#403020"/><circle cx="8" cy="6.2" r="2.7" fill="#c8a890" stroke="#7a5a40" stroke-width="1.15"/><path d="M10.2 8.4L13.4 11.4" stroke="#2a3cc0" stroke-width="2" stroke-linecap="round"/><ellipse cx="8.2" cy="6.4" rx="1.5" ry="1.1" fill="#181840"/></g></svg>
<svg style="left:213px;top:22px" width="20" height="20" viewBox="0 0 20 20"><g transform="translate(1.25 1.10) scale(1.0118 1.0303)"><rect x="0.7" y="0.7" width="15.6" height="15.1" rx="1.4" ry="1.4" fill="#f4f2f4" stroke="#5a6aa2" stroke-width="1.4"/><path d="M5.7 2.8L11.8 7.9L6.2 13Z" fill="#14d41c" stroke="#18a030" stroke-width="0.9" stroke-linejoin="round"/></g></svg>
<svg style="left:232px;top:22px" width="20" height="20" viewBox="0 0 20 20"><g transform="translate(1.55 1.10) scale(1.0118 1.0303)"><rect x="0.7" y="0.7" width="15.6" height="15.1" rx="1.4" ry="1.4" fill="#f4f2f4" stroke="#5a6aa2" stroke-width="1.4"/><path d="M3.7 10.4L7.9 4.8H13L9.1 10.8Z" fill="#f0f0f0" stroke="#262626" stroke-width="1.45" stroke-linejoin="round"/><path d="M5 8.6L8.6 10.6" stroke="#2a2a2a" stroke-width="0" /></g></svg>
<svg style="left:251px;top:22px" width="20" height="20" viewBox="0 0 20 20"><g transform="translate(1.65 1.10) scale(1.0118 1.0303)"><rect x="0.7" y="0.7" width="15.6" height="15.1" rx="1.4" ry="1.4" fill="#f4f2f4" stroke="#5a6aa2" stroke-width="1.4"/><path d="M4.8 7L6.2 3H11.4L13 7Z" fill="#c4c4c4" stroke="#4a4a4a" stroke-width="0.9"/><path d="M6.4 4.4H11.6 M6 5.6H12.2" stroke="#5a5a5a" stroke-width="0.7"/><path d="M2.8 9.4L4 7H13.4L14.4 9.2V10.6L13 12.2H4.2L2.8 10.8Z" fill="#262626"/><path d="M4 9.7H12.8" stroke="#ececec" stroke-width="0.8"/><path d="M4.6 12.1H12.6" stroke="#111" stroke-width="0.8"/></g></svg>
<svg style="left:271px;top:22px" width="20" height="20" viewBox="0 0 20 20"><g transform="translate(1.05 1.10) scale(1.0118 1.0303)"><rect x="0.7" y="0.7" width="15.6" height="15.1" rx="1.4" ry="1.4" fill="#f4f2f4" stroke="#5a6aa2" stroke-width="1.4"/><rect x="3.1" y="3.3" width="9.7" height="9" fill="#141414"/><rect x="5.3" y="4.1" width="5.3" height="3" fill="#e4e4e4"/><path d="M5.3 5.1H10.6 M5.3 6.1H10.6" stroke="#a8a8a8" stroke-width="0.5"/><rect x="4" y="9" width="5.6" height="2.5" fill="#5c6c24"/><rect x="10" y="10.6" width="1.1" height="1.1" fill="#f0f0f0"/></g></svg>
<svg style="left:299px;top:22px" width="20" height="20" viewBox="0 0 20 20"><g transform="translate(1.85 1.10) scale(1.0118 1.0303)"><rect x="0.7" y="0.7" width="15.6" height="15.1" rx="1.4" ry="1.4" fill="#fafae6" stroke="#5a6aa2" stroke-width="1.4"/><path d="M9.8 3.2L12.6 5.8" stroke="#f4f060" stroke-width="2" opacity="0.75"/><path d="M4.7 4.9Q4.7 4.3 5.4 4.3H9L11.6 6.7V11.7Q11.6 12.4 10.9 12.4H5.4Q4.7 12.4 4.7 11.7Z" fill="#c8c8c0" stroke="#38380c" stroke-width="1.25"/><path d="M7.2 5.7V10.3 M7.4 8.7H9.4Q10 8.7 10 9.3V10.9" stroke="#f8f8f0" stroke-width="1" fill="none"/></g></svg>
<svg style="left:319px;top:22px" width="20" height="20" viewBox="0 0 20 20"><g transform="translate(1.15 1.10) scale(1.0118 1.0303)"><rect x="0.7" y="0.7" width="15.6" height="15.1" rx="1.4" ry="1.4" fill="#f4f2f4" stroke="#5a6aa2" stroke-width="1.4"/><rect x="2.9" y="3.7" width="9.8" height="9.6" fill="#1c2424"/><rect x="2.9" y="8.3" width="9.8" height="5" fill="#14b8a8"/><rect x="5.9" y="4.3" width="4.5" height="3.5" fill="#c4c8c8"/><rect x="6.3" y="10.6" width="3.4" height="2.7" fill="#0c0c10"/><rect x="3.3" y="4.4" width="1.6" height="3" fill="#3a5050"/><rect x="11" y="4.4" width="1.4" height="3" fill="#3a5050"/></g></svg>
</body></html>
